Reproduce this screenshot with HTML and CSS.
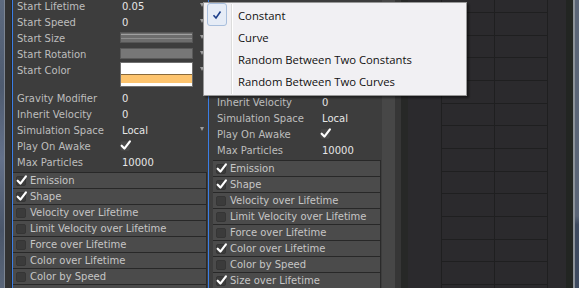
FILE: index.html
```html
<!DOCTYPE html>
<html>
<head>
<meta charset="utf-8">
<link rel="stylesheet" href="styles.css">
</head>
<body>
<div class="screen">
  <div class="desk"></div>
  <div class="gutter"></div>

  <div class="panel p1">
    <div class="props">
      <div class="row"><span class="lbl">Start Lifetime</span><span class="val">0.05</span><span class="arrow"></span></div>
      <div class="row"><span class="lbl">Start Speed</span><span class="val">0</span><span class="arrow"></span></div>
      <div class="row"><span class="lbl">Start Size</span><span class="field curvebar"><i class="ln ln1"></i><i class="ln ln2"></i></span><span class="arrow"></span></div>
      <div class="row"><span class="lbl">Start Rotation</span><span class="field flatbar"></span><span class="arrow"></span></div>
      <div class="row tall"><span class="lbl">Start Color</span><span class="field colorbox"><i class="c-white"></i><i class="c-line"></i><i class="c-orange"></i><i class="c-alpha"></i></span><span class="arrow"></span></div>
      <div class="row"><span class="lbl">Gravity Modifier</span><span class="val">0</span></div>
      <div class="row"><span class="lbl">Inherit Velocity</span><span class="val">0</span></div>
      <div class="row"><span class="lbl">Simulation Space</span><span class="val grow">Local</span><span class="arrow"></span></div>
      <div class="row"><span class="lbl">Play On Awake</span><span class="val box"><span class="tog on"><svg viewBox="0 0 10 10"><path d="M1.5 5.2 L4 7.8 L9 1.2"/></svg></span></span></div>
      <div class="row"><span class="lbl">Max Particles</span><span class="val">10000</span></div>
    </div>
    <div class="sections">
      <div class="sec"><span class="tog on"><svg viewBox="0 0 10 10"><path d="M1.5 5.2 L4 7.8 L9 1.2"/></svg></span>Emission</div>
      <div class="sec"><span class="tog on"><svg viewBox="0 0 10 10"><path d="M1.5 5.2 L4 7.8 L9 1.2"/></svg></span>Shape</div>
      <div class="sec"><span class="tog"></span>Velocity over Lifetime</div>
      <div class="sec"><span class="tog"></span>Limit Velocity over Lifetime</div>
      <div class="sec"><span class="tog"></span>Force over Lifetime</div>
      <div class="sec"><span class="tog"></span>Color over Lifetime</div>
      <div class="sec"><span class="tog"></span>Color by Speed</div>
      <div class="sec"><span class="tog"></span></div>
    </div>
  </div>

  <div class="panel p2">
    <div class="props">
      <div class="row"><span class="lbl">Inherit Velocity</span><span class="val">0</span></div>
      <div class="row"><span class="lbl">Simulation Space</span><span class="val">Local</span></div>
      <div class="row"><span class="lbl">Play On Awake</span><span class="val box"><span class="tog on"><svg viewBox="0 0 10 10"><path d="M1.5 5.2 L4 7.8 L9 1.2"/></svg></span></span></div>
      <div class="row"><span class="lbl">Max Particles</span><span class="val">10000</span></div>
    </div>
    <div class="sections">
      <div class="sec"><span class="tog on"><svg viewBox="0 0 10 10"><path d="M1.5 5.2 L4 7.8 L9 1.2"/></svg></span>Emission</div>
      <div class="sec"><span class="tog on"><svg viewBox="0 0 10 10"><path d="M1.5 5.2 L4 7.8 L9 1.2"/></svg></span>Shape</div>
      <div class="sec"><span class="tog"></span>Velocity over Lifetime</div>
      <div class="sec"><span class="tog"></span>Limit Velocity over Lifetime</div>
      <div class="sec"><span class="tog"></span>Force over Lifetime</div>
      <div class="sec"><span class="tog on"><svg viewBox="0 0 10 10"><path d="M1.5 5.2 L4 7.8 L9 1.2"/></svg></span>Color over Lifetime</div>
      <div class="sec"><span class="tog"></span>Color by Speed</div>
      <div class="sec"><span class="tog on"><svg viewBox="0 0 10 10"><path d="M1.5 5.2 L4 7.8 L9 1.2"/></svg></span>Size over Lifetime</div>
    </div>
  </div>

  <div class="scroll"></div>
  <div class="sep1"></div>
  <div class="sep2"></div>
  <div class="graph">
    <svg class="grid" width="158" height="288" viewBox="0 0 158 288" shape-rendering="crispEdges">
      <g stroke="#1f1f20" stroke-width="1">
        <line x1="33.5" y1="0" x2="33.5" y2="288"/>
        <line x1="86.5" y1="0" x2="86.5" y2="288"/>
        <line x1="139.5" y1="0" x2="139.5" y2="288"/>
        <line x1="33" y1="12.5" x2="140" y2="12.5"/>
        <line x1="33" y1="35.5" x2="140" y2="35.5"/>
        <line x1="33" y1="57.5" x2="140" y2="57.5"/>
        <line x1="33" y1="80.5" x2="140" y2="80.5"/>
        <line x1="33" y1="103.5" x2="140" y2="103.5"/>
        <line x1="33" y1="125.5" x2="140" y2="125.5"/>
        <line x1="33" y1="148.5" x2="140" y2="148.5"/>
        <line x1="33" y1="171.5" x2="140" y2="171.5"/>
        <line x1="33" y1="193.5" x2="140" y2="193.5"/>
        <line x1="33" y1="216.5" x2="140" y2="216.5"/>
        <line x1="33" y1="239.5" x2="140" y2="239.5"/>
        <line x1="33" y1="261.5" x2="140" y2="261.5"/>
        <line x1="33" y1="284.5" x2="140" y2="284.5"/>
      </g>
    </svg>
  </div>
  <div class="rgut"></div>
  <div class="redge"></div>

  <div class="menu">
    <div class="gutline"></div>
    <div class="item checked">
      <span class="checkbox"><svg viewBox="0 0 12 12"><path d="M2.5 6.3 L5 9 L9.5 2.5"/></svg></span>
      <span class="txt">Constant</span>
    </div>
    <div class="item"><span class="checkbox"></span><span class="txt">Curve</span></div>
    <div class="item"><span class="checkbox"></span><span class="txt">Random Between Two Constants</span></div>
    <div class="item"><span class="checkbox"></span><span class="txt">Random Between Two Curves</span></div>
  </div>
</div>
</body>
</html>
```

FILE: styles.css
```css
html, body {
  margin: 0;
  padding: 0;
  background: #2b2a2d;
}
.screen {
  position: relative;
  display: flex;
  width: 579px;
  height: 288px;
  overflow: hidden;
  font-family: "DejaVu Sans", sans-serif;
  font-size: 10px;
}
.desk {
  width: 4px;
  flex: none;
  background: linear-gradient(180deg, #5d6a7f 0%, #4e5b70 30%, #64718a 55%, #4a566a 80%, #5a6679 100%);
  border-right: 1px solid #7c8593;
}
.gutter {
  width: 6px;
  flex: none;
  background: #323232;
  border-right: 1px solid #262626;
}
.panel {
  flex: none;
  background: #3d3d3d;
  display: flex;
  flex-direction: column;
}
.p1 {
  width: 195px;
  border-left: 1px solid #3a7ee6;
  border-right: 1px solid #3a7ee6;
}
.p2 {
  width: 173px;
}
.props {
  display: flex;
  flex-direction: column;
}
.p1 .props {
  margin-top: -2px;
  padding-left: 4px;
}
.p2 .props {
  padding-top: 94px;
  padding-left: 8px;
}
.row {
  height: 15px;
  padding-top: 1px;
  line-height: 15px;
  display: flex;
  align-items: flex-start;
  white-space: nowrap;
}
.row.tall {
  height: 27px;
}
.lbl {
  width: 103px;
  flex: none;
  color: #bdbdbd;
}
.val {
  flex: 1;
  padding-left: 2px;
  color: #e6e6e6;
}
.val.box {
  padding-left: 0;
}
.arrow {
  flex: none;
  width: 0;
  height: 0;
  margin: 4px 4px 0 auto;
  border-left: 2.5px solid transparent;
  border-right: 2.5px solid transparent;
  border-top: 4px solid #9c9c9c;
}
.field {
  flex: none;
  width: 73px;
  box-sizing: border-box;
  position: relative;
}
.curvebar {
  height: 11px;
  margin-top: 1px;
  background: #6d6d6d;
  border: 1px solid #565656;
}
.curvebar .ln {
  position: absolute;
  left: 0;
  right: 0;
  height: 1px;
  background: #a0a0a0;
}
.curvebar .ln1 { top: 1px; }
.curvebar .ln2 { top: 5px; background: #8e8e8e; }
.flatbar {
  height: 11px;
  margin-top: 1px;
  background: #777777;
  border: 1px solid #5a5a5a;
}
.colorbox {
  height: 25px;
  margin-top: -1px;
  border: 1px solid #707070;
  display: flex;
  flex-direction: column;
}
.colorbox i { display: block; }
.c-white { height: 11px; background: #ffffff; }
.c-line { height: 1px; background: #8a6a3a; }
.c-orange { height: 8px; background: #fdc46e; }
.c-alpha { height: 3px; background: #ffffff; }

.tog {
  display: inline-block;
  flex: none;
  width: 10px;
  height: 10px;
  box-sizing: border-box;
  border-radius: 2px;
  background: #3b3b3b;
  border: 1px solid #353535;
  position: relative;
  vertical-align: top;
}
.tog svg {
  position: absolute;
  left: -1px;
  top: -2px;
  width: 11px;
  height: 11px;
  overflow: visible;
}
.tog svg path {
  fill: none;
  stroke: #ffffff;
  stroke-width: 2;
  stroke-linecap: round;
  stroke-linejoin: round;
}
.row .tog {
  margin-top: 2px;
  background: #4a4a4a;
  border-color: #454545;
}

.sections {
  margin-top: 2px;
  display: flex;
  flex-direction: column;
}
.p1 .sections { margin-right: 1px; }
.p2 .sections { margin-left: 4px; margin-right: 1px; }
.sec {
  height: 15px;
  line-height: 15px;
  border-top: 1px solid #282828;
  border-right: 1px solid #2a2a2a;
  background: #4b4b4b;
  color: #c6c6c6;
  display: flex;
  align-items: center;
  padding-left: 3px;
  white-space: nowrap;
}
.sec .tog {
  margin-right: 4px;
}

.scroll {
  width: 13px;
  flex: none;
  background: #474747;
}
.sep1 {
  width: 6px;
  flex: none;
  background: #363636;
}
.sep2 {
  width: 7px;
  flex: none;
  background: #272827;
}
.graph {
  width: 158px;
  flex: none;
  background: #2b2a2d;
}
.grid { display: block; }
.rgut {
  width: 7px;
  flex: none;
  background: #222522;
}
.redge {
  width: 4px;
  flex: none;
  border-left: 2px solid #8d939a;
  background: linear-gradient(180deg, #5b6577 0%, #5b6577 75%, #3e4a5f 78%, #3e4a5f 100%);
}

/* popup menu */
.menu {
  position: absolute;
  left: 203px;
  top: 2px;
  width: 262px;
  padding: 2px 0;
  background: #f1f0f3;
  border: 1px solid #979797;
  box-shadow: 2px 2px 2px rgba(0, 0, 0, 0.45);
  font-family: "Open Sans", "Noto Sans", sans-serif;
  font-size: 11.3px;
  color: #111111;
}
.gutline {
  position: absolute;
  left: 27px;
  top: 1px;
  bottom: 1px;
  width: 1px;
  background: #dcdcdc;
  border-right: 1px solid #ffffff;
}
.item {
  height: 22px;
  line-height: 22px;
  display: flex;
  align-items: flex-start;
}
.checkbox {
  width: 20px;
  height: 23px;
  margin-top: -2px;
  margin-left: 3px;
  margin-right: 11px;
  box-sizing: border-box;
  flex: none;
  display: flex;
  align-items: center;
  justify-content: center;
}
.checked .checkbox {
  background: #e6ecf6;
  border: 1px solid #a8bedc;
  border-radius: 3px;
}
.checkbox svg {
  width: 12px;
  height: 12px;
}
.checkbox svg path {
  fill: none;
  stroke: #1d3f8a;
  stroke-width: 1.6;
}
.txt {
  white-space: nowrap;
}
```
